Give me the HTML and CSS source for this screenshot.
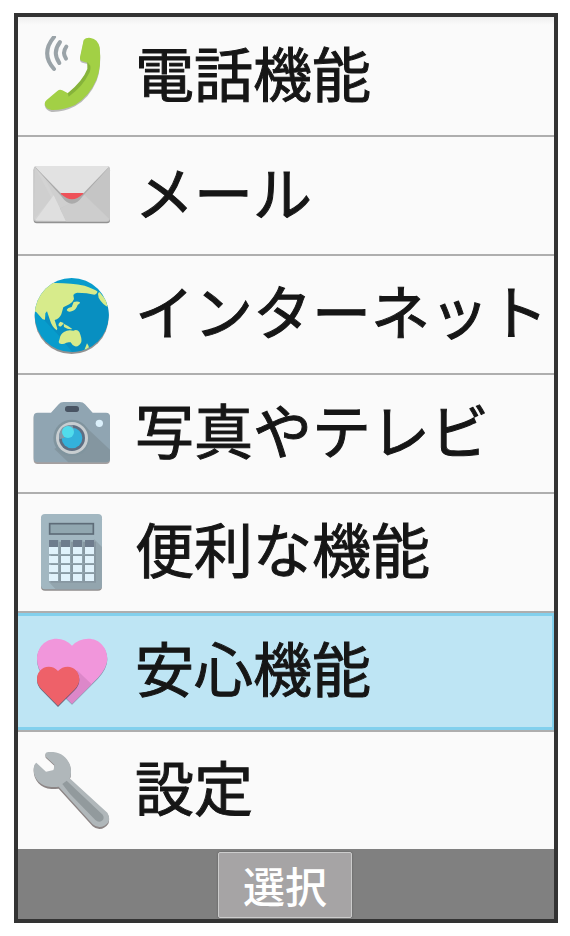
FILE: index.html
```
<!DOCTYPE html>
<html lang="ja">
<head>
    <meta charset="UTF-8">
    <meta name="viewport" content="width=device-width, initial-scale=1">
    <title>メニュー</title>
    <link rel="stylesheet" href="styles.css">
</head>
<body>
    <div class="screen">
        <nav class="menu">
            <a class="item" href="#phone">
                <svg class="icon" viewBox="96 108 240 243" aria-hidden="true">
                    <g fill="none" stroke="#9aa3a8" stroke-width="12" stroke-linecap="round">
                        <path d="M162 111Q121 160 162 207"/>
                        <path d="M180 126Q156 158 178 189"/>
                        <path d="M199 140Q186 158 198 176"/>
                    </g>
                    <path d="M251 120Q258 112 272 114Q293 117 299 142Q305 200 290 238Q268 290 225 315Q190 333 155 332Q137 328 134 312Q134 304 140 300L172 273Q179 267 187 271L204 280Q248 252 267 203L262 188L247 184Q239 181 240 172Z" fill="#777" opacity=".5" transform="translate(0 4)"/>
                    <path d="M251 120Q258 112 272 114Q293 117 299 142Q305 200 290 238Q268 290 225 315Q190 331 155 330Q137 328 134 312Q134 304 140 300L172 273Q179 267 187 271L204 280Q248 252 267 203L262 188L247 184Q239 181 240 172Z" fill="#a2d045"/>
                    <path d="M262 186L271 197Q273 212 266 222Q248 260 206 290L203 280Q248 243 262 207Z" fill="#86b33a"/>
                </svg>
                <span class="label">電話機能</span>
            </a>
            <a class="item" href="#mail">
                <svg class="icon" viewBox="66 45 240 243" aria-hidden="true">
                    <rect x="71" y="82" width="229" height="168" rx="9" fill="#929292"/>
                    <rect x="71" y="78" width="229" height="167" rx="9" fill="#c5c5c5"/>
                    <path d="M74 82L184 190L72 239Z" fill="#cfcfcf"/>
                    <path d="M75 83L100 106L168 243H80Q73 240 74 235L125 174Z" fill="#d3d3d3"/>
                    <path d="M76 241L131 166L168 243Z" fill="#dfdfdf"/>
                    <path d="M223 164L298 237Q296 244 290 244H168L150 206Z" fill="#cdcdcd"/>
                    <path d="M75 82L154 169Q186 214 218 169L297 82Z" fill="#ababab"/>
                    <path d="M148 150H225L218 163Q186 193 154 163Z" fill="#ee5259"/>
                    <path d="M75 80Q77 78 81 78H291Q295 78 297 80L221 159H152Z" fill="#e2e2e2"/>
                </svg>
                <span class="label">メール</span>
            </a>
            <a class="item" href="#internet">
                <svg class="icon" viewBox="66 42 240 243" aria-hidden="true">
                    <clipPath id="globe"><circle cx="185" cy="165" r="111"/></clipPath>
                    <circle cx="185" cy="171" r="111" fill="#777" opacity=".8"/>
                    <circle cx="185" cy="165" r="111" fill="#079ccc"/>
                    <g clip-path="url(#globe)">
                        <path d="M200 100L264 98L300 140V260L190 280L145 225L100 178Z" fill="#088fc1"/>
                        <g fill="#d7eb8b">
                            <path d="M127 69Q180 68 224 77Q250 86 262 94Q262 103 253 104L230 100L202 98Q193 99 190 105L192 117Q188 128 178 133L160 142L154 163Q148 177 134 180L142 206L140 211Q126 202 119 178L111 154L106 160L105 179L98 178L78 155L60 155V70Z"/>
                            <path d="M191 126Q203 122 210 127Q211 131 203 135Q198 150 187 153Q174 158 170 150Q173 143 185 141Z"/>
                            <path d="M264 102Q265 96 269 97L300 135V143Q279 137 266 113Z"/>
                            <path d="M151 185L161 189L159 193L155 197Q150 203 145 196Q145 190 151 185Z"/>
                            <path d="M161 191Q177 198 187 207Q176 210 162 201Z"/>
                            <path d="M149 236Q151 222 162 216Q174 208 190 212Q202 207 208 216Q216 235 214 246Q207 261 195 259Q187 257 182 247Q170 245 163 251Q147 255 146 246Z"/>
                            <path d="M231 250Q241 263 233 274L220 278Z"/>
                        </g>
                    </g>
                </svg>
                <span class="label">インターネット</span>
            </a>
            <a class="item" href="#camera">
                <svg class="icon" viewBox="66 39 240 243" aria-hidden="true">
                    <path d="M71 110Q71 98 83 98H123L146 73Q151 66 161 66H209Q219 66 225 73L248 98H288Q300 98 300 110V238Q300 249 288 249H83Q71 249 71 238Z" fill="#8f8888" opacity=".8" transform="translate(0 3)"/>
                    <path d="M71 110Q71 98 83 98H123L146 73Q151 66 161 66H209Q219 66 225 73L248 98H288Q300 98 300 110V235Q300 247 288 247H83Q71 247 71 235Z" fill="#90a5b2"/>
                    <path d="M225 139L300 209V235Q300 247 288 247H175L133 207Z" fill="#8496a0"/>
                    <circle cx="185" cy="174" r="55" fill="#80949e"/>
                    <circle cx="186" cy="174" r="48" fill="#c8ced1"/>
                    <circle cx="186" cy="174" r="39" fill="#5f6d81"/>
                    <circle cx="186" cy="174" r="31" fill="#34b1db"/>
                    <path d="M157 143A42 42 0 0 1 188 136L192 152L163 173L148 178A40 40 0 0 1 157 143Z" fill="#8198a8"/>
                    <circle cx="174" cy="156" r="18" fill="#51dcec"/>
                    <circle cx="268" cy="130" r="11" fill="#dbf0fb"/>
                    <rect x="165" y="78" width="42" height="18" rx="8" fill="#495463"/>
                </svg>
                <span class="label">写真やテレビ</span>
            </a>
            <a class="item" href="#tools">
                <svg class="icon" viewBox="66 66 240 243" aria-hidden="true">
                    <rect x="93" y="76" width="183" height="226" rx="12" fill="#908d8d"/>
                    <rect x="93" y="72" width="183" height="226" rx="12" fill="#a2b7c1"/>
                    <path d="M253 148L276 171V286Q276 298 264 298H137L116 275Z" fill="#93a5ae"/>
                    <rect x="119" y="101" width="131" height="31" fill="#91a7b0" stroke="#5e6c78" stroke-width="5"/>
                    <path d="M122 155H258V278H122Z" fill="#8797a1"/>
                    <path d="M146 150V274M182 150V274M218 150V274M117 194H254M117 221H254M117 248H254" stroke="#94a7b1" stroke-width="3"/>
                    <g fill="#6e7c8d">
                        <path d="M117 150h27v21h-27zM153 150h27v21h-27zM189 150h27v21h-27zM225 150h27v21h-27z"/>
                    </g>
                    <g fill="#e0f2fc">
                        <path d="M117 171h27v21h-27zM153 171h27v21h-27zM189 171h27v21h-27zM225 171h27v21h-27z"/>
                        <path d="M117 198h27v21h-27zM153 198h27v21h-27zM189 198h27v21h-27zM225 198h27v21h-27z"/>
                        <path d="M117 225h27v21h-27zM153 225h27v21h-27zM189 225h27v21h-27zM225 225h27v21h-27z"/>
                        <path d="M117 252h27v21h-27zM153 252h27v21h-27zM189 252h27v21h-27zM225 252h27v21h-27z"/>
                    </g>
                </svg>
                <span class="label">便利な機能</span>
            </a>
            <a class="item selected" href="#safety" aria-current="true">
                <svg class="icon" viewBox="66 63 240 243" aria-hidden="true">
                    <path d="M186 107Q166 86 140 86C105 86 81 113 81 147Q81 174 101 198L186 281L264 203Q292 172 292 146C292 112 267 86 235 86Q206 86 186 107Z" fill="#67859a" opacity=".8" transform="translate(0 3)"/>
                    <path d="M186 107Q166 86 140 86C105 86 81 113 81 147Q81 174 101 198L186 281L264 203Q292 172 292 146C292 112 267 86 235 86Q206 86 186 107Z" fill="#f196db"/>
                    <path d="M201 181L245 223L186 281L150 245Z" fill="#dc87c9"/>
                    <path d="M144 183Q133 170 116 170C95 170 81 187 81 207Q81 224 94 237L144 288L195 237Q208 223 208 207C208 186 192 170 173 170Q156 170 144 183Z" fill="#4d4a62" opacity=".8" transform="translate(0 3)"/>
                    <path d="M144 183Q133 170 116 170C95 170 81 187 81 207Q81 224 94 237L144 287L195 237Q208 223 208 207C208 186 192 170 173 170Q156 170 144 183Z" fill="#ee6169"/>
                </svg>
                <span class="label">安心機能</span>
            </a>
            <a class="item" href="#settings">
                <svg class="icon" viewBox="66 60 240 243" aria-hidden="true">
                    <path d="M106 71Q108 66 115 66H130C160 68 183 94 183 123Q184 137 179 145L292 248Q301 262 295 278Q285 293 268 294Q257 294 248 286L146 173Q137 174 124 174C92 171 71 148 71 119Q71 103 79 98L108 125L131 120L133 104L107 80Z" fill="#8c8585" transform="translate(0 3)"/>
                    <path d="M106 71Q108 66 115 66H130C160 68 183 94 183 123Q184 137 179 145L292 248Q301 262 295 277Q285 291 268 291Q257 291 248 283L146 170Q137 172 124 171C92 169 71 148 71 119Q71 103 79 98L108 125L131 120L133 104L107 80Z" fill="#b0b7ba"/>
                    <path d="M157 162L170 152L278 254Q285 265 276 272Q266 279 256 270L180 192Z" fill="#929a9d"/>
                </svg>
                <span class="label">設定</span>
            </a>
        </nav>
        <footer class="softkeys">
            <button class="select-btn" type="button">選択</button>
        </footer>
    </div>
</body>
</html>
```
FILE: styles.css
```
* {
    margin: 0;
    padding: 0;
    box-sizing: border-box;
}

body {
    padding: 13px 12px 13px 14px;
    background: #fff;
    font-family: "Noto Sans CJK JP", sans-serif;
    color: #161616;
}

.screen {
    border: 4px solid #333;
    background: #fafafa;
}

.menu {
    padding-top: 1px;
    background: linear-gradient(#eee, #fafafa 8px);
}

.item {
    display: flex;
    align-items: center;
    gap: 23px;
    height: 119px;
    padding-left: 14px;
    border-bottom: 2px solid #aeaeae;
    color: inherit;
    text-decoration: none;
    overflow: hidden;
}

.item:last-child {
    height: 117px;
    border-bottom: none;
}

.item.selected {
    background: #bee5f4;
    box-shadow: inset 0 3px #82d0ed, inset -2px -3px #82d0ed;
}

.icon {
    flex: none;
    width: 80px;
    height: 81px;
}

.label {
    font-size: 59px;
    font-weight: 400;
    -webkit-text-stroke: 1px;
    stroke-linejoin: round;
    line-height: 76px;
    padding-bottom: 10px;
    white-space: nowrap;
}

.softkeys {
    display: flex;
    justify-content: center;
    padding: 3px 2px 1px 0;
    background: #808080;
}

.select-btn {
    width: 134px;
    height: 66px;
    border: 1px solid #ccc;
    border-radius: 2px;
    background: #a6a4a5;
    box-shadow: 0 0 2px #555;
    color: #fff;
    font-family: inherit;
    font-size: 42px;
    font-weight: 500;
    line-height: 60px;
}
```
